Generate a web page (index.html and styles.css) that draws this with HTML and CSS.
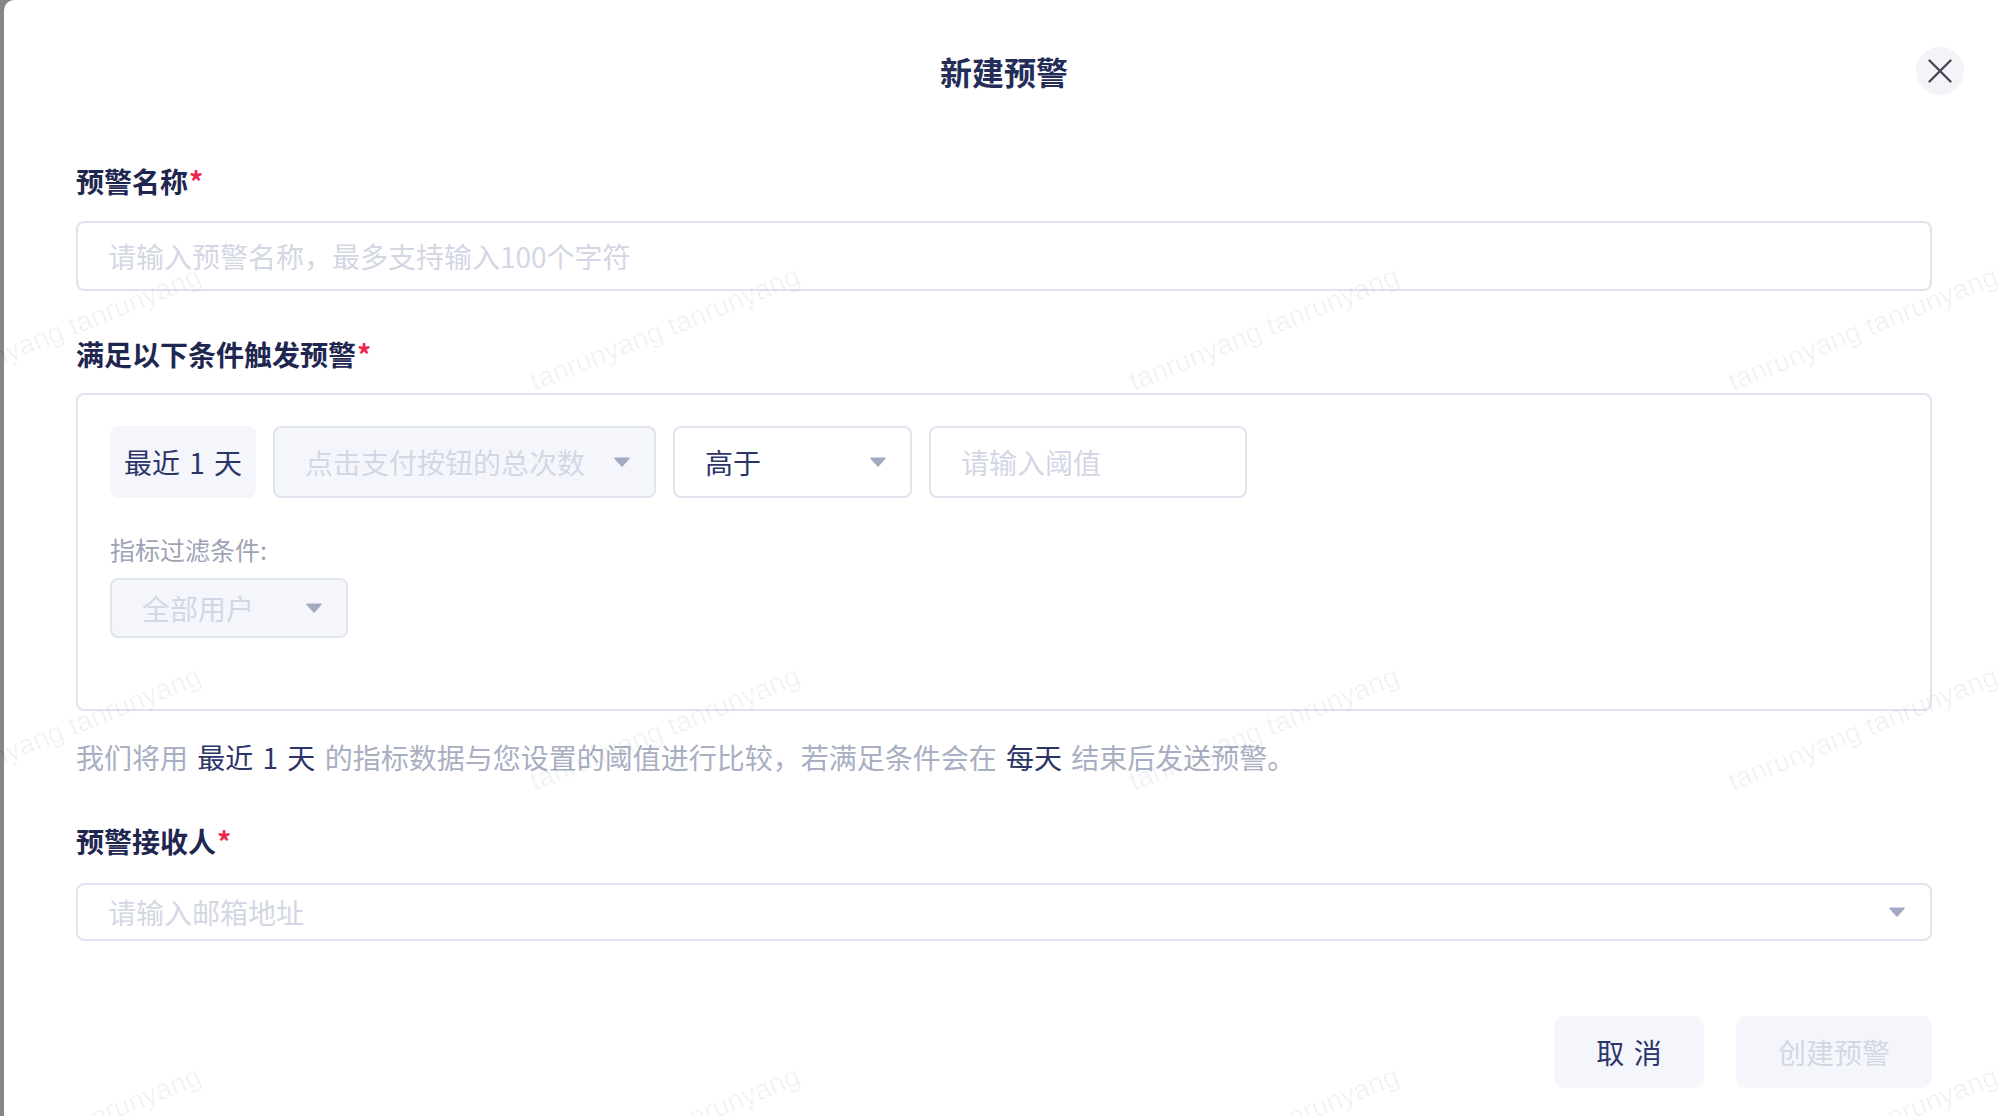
FILE: index.html
```html
<!DOCTYPE html>
<html lang="zh-CN">
<head>
<meta charset="utf-8">
<title>新建预警</title>
<link rel="stylesheet" href="styles.css">
</head>
<body>
<div class="modal">
  <header class="modal-header">
    <div class="header-spacer"></div>
    <h1 class="modal-title">新建预警</h1>
    <button class="close-btn" type="button" aria-label="关闭">
      <svg width="24" height="24" viewBox="0 0 24 24"><path d="M1.5 1.5L22.5 22.5M22.5 1.5L1.5 22.5" stroke="#4d4358" stroke-width="2.4" stroke-linecap="round" fill="none"/></svg>
    </button>
  </header>

  <section class="field field-name">
    <div class="field-label">预警名称<span class="req">*</span></div>
    <input class="text-input name-input" type="text" placeholder="请输入预警名称，最多支持输入100个字符">
  </section>

  <section class="field field-cond">
    <div class="field-label">满足以下条件触发预警<span class="req">*</span></div>
    <div class="cond-box">
      <div class="cond-row">
        <div class="chip">最近 1 天</div>
        <div class="select select-metric is-disabled">
          <span class="select-text">点击支付按钮的总次数</span>
          <svg class="caret" width="16" height="10" viewBox="0 0 16 10"><path d="M1 0.5H15a0.8 0.8 0 0 1 0.6 1.3L8.6 9.4a0.8 0.8 0 0 1-1.2 0L0.4 1.8A0.8 0.8 0 0 1 1 0.5Z"/></svg>
        </div>
        <div class="select select-op">
          <span class="select-text is-value">高于</span>
          <svg class="caret" width="16" height="10" viewBox="0 0 16 10"><path d="M1 0.5H15a0.8 0.8 0 0 1 0.6 1.3L8.6 9.4a0.8 0.8 0 0 1-1.2 0L0.4 1.8A0.8 0.8 0 0 1 1 0.5Z"/></svg>
        </div>
        <input class="text-input threshold-input" type="text" placeholder="请输入阈值">
      </div>
      <div class="filter-label">指标过滤条件:</div>
      <div class="select select-filter is-disabled">
        <span class="select-text">全部用户</span>
        <svg class="caret" width="16" height="10" viewBox="0 0 16 10"><path d="M1 0.5H15a0.8 0.8 0 0 1 0.6 1.3L8.6 9.4a0.8 0.8 0 0 1-1.2 0L0.4 1.8A0.8 0.8 0 0 1 1 0.5Z"/></svg>
      </div>
    </div>
    <p class="cond-desc">我们将用 <span class="hl">最近 1 天</span> 的指标数据与您设置的阈值进行比较，若满足条件会在 <span class="hl">每天</span> 结束后发送预警。</p>
  </section>

  <section class="field field-recv">
    <div class="field-label">预警接收人<span class="req">*</span></div>
    <div class="select select-email">
      <input class="email-input" type="text" placeholder="请输入邮箱地址">
      <svg class="caret" width="16" height="10" viewBox="0 0 16 10"><path d="M1 0.5H15a0.8 0.8 0 0 1 0.6 1.3L8.6 9.4a0.8 0.8 0 0 1-1.2 0L0.4 1.8A0.8 0.8 0 0 1 1 0.5Z"/></svg>
    </div>
  </section>

  <footer class="modal-footer">
    <button class="btn btn-cancel" type="button">取 消</button>
    <button class="btn btn-create" type="button" disabled>创建预警</button>
  </footer>
</div>

<div class="watermark" aria-hidden="true">
  <div class="wm-grid">
    <div class="wm-cell"><span>tanrunyang tanrunyang</span></div>
    <div class="wm-cell"><span>tanrunyang tanrunyang</span></div>
    <div class="wm-cell"><span>tanrunyang tanrunyang</span></div>
    <div class="wm-cell"><span>tanrunyang tanrunyang</span></div>
    <div class="wm-cell"><span>tanrunyang tanrunyang</span></div>
    <div class="wm-cell"><span>tanrunyang tanrunyang</span></div>
    <div class="wm-cell"><span>tanrunyang tanrunyang</span></div>
    <div class="wm-cell"><span>tanrunyang tanrunyang</span></div>
    <div class="wm-cell"><span>tanrunyang tanrunyang</span></div>
    <div class="wm-cell"><span>tanrunyang tanrunyang</span></div>
    <div class="wm-cell"><span>tanrunyang tanrunyang</span></div>
    <div class="wm-cell"><span>tanrunyang tanrunyang</span></div>
  </div>
</div>
</body>
</html>
```

FILE: styles.css
```css
* {
  box-sizing: border-box;
}

html,
body {
  margin: 0;
  height: 100%;
}

body {
  position: relative;
  overflow: hidden;
  background: #868686;
  font-family: "Noto Sans CJK SC", "Noto Sans", sans-serif;
  color: #2c3568;
}

.modal {
  width: 1994px;
  height: 1116px;
  margin-left: 4px;
  padding: 47px 66px 0 72px;
  background: #ffffff;
  border-top-left-radius: 10px;
}

/* header */
.modal-header {
  display: grid;
  grid-template-columns: 1fr auto 1fr;
  align-items: center;
  height: 48px;
}

.modal-title {
  margin: 0;
  font-size: 32px;
  line-height: 48px;
  font-weight: 700;
  color: #242c58;
}

.close-btn {
  justify-self: end;
  margin-right: -32px;
  width: 48px;
  height: 48px;
  padding: 0;
  border: none;
  border-radius: 50%;
  background: #f4f4f8;
  display: flex;
  align-items: center;
  justify-content: center;
}

/* fields */
.field-label {
  font-size: 28px;
  line-height: 40px;
  font-weight: 700;
  color: #1f2750;
}

.req {
  color: #f0264f;
  margin-left: 1px;
}

.field-name .field-label {
  margin-top: 66px;
}

.field-cond .field-label {
  margin-top: 43px;
}

.field-recv .field-label {
  margin-top: 44px;
}

.text-input {
  display: block;
  border: 2px solid #e0e4ef;
  border-radius: 8px;
  background: #ffffff;
  padding: 0 30px;
  font-family: inherit;
  font-size: 28px;
  color: #2c3568;
  outline: none;
}

.text-input::placeholder,
.email-input::placeholder {
  color: #d3d7e4;
}

.name-input {
  width: 100%;
  height: 70px;
  margin-top: 20px;
}

/* condition box */
.cond-box {
  margin-top: 19px;
  height: 318px;
  border: 2px solid #e0e4ef;
  border-radius: 8px;
  padding: 31px 32px 0;
}

.cond-row {
  display: flex;
  gap: 17px;
  height: 72px;
}

.chip {
  width: 146px;
  display: flex;
  align-items: center;
  justify-content: center;
  background: #f5f6fb;
  border-radius: 8px;
  font-size: 28px;
  color: #2c3568;
  white-space: pre;
  word-spacing: 3px;
}

.select {
  display: flex;
  align-items: center;
  border: 2px solid #e0e4ef;
  border-radius: 8px;
  background: #ffffff;
  padding: 0 24px 0 30px;
}

.select.is-disabled {
  background: #f5f6fb;
}

.select-text {
  flex: 1;
  font-size: 28px;
  color: #d3d7e4;
  white-space: nowrap;
}

.select-text.is-value {
  color: #2c3568;
}

.caret {
  flex: none;
  fill: #a3aac4;
}

.select-metric {
  width: 383px;
}

.select-op {
  width: 239px;
}

.threshold-input {
  width: 318px;
  height: 72px;
}

.filter-label {
  margin-top: 33px;
  font-size: 25px;
  line-height: 36px;
  color: #9ea3b5;
}

.select-filter {
  margin-top: 11px;
  width: 238px;
  height: 60px;
}

.cond-desc {
  margin: 26px 0 0;
  font-size: 28px;
  line-height: 40px;
  color: #a9afc2;
  white-space: pre;
  word-spacing: 3px;
}

.hl {
  color: #2c3568;
}

/* receivers */
.select-email {
  margin-top: 22px;
  height: 58px;
  padding-right: 25px;
}

.email-input {
  flex: 1;
  border: none;
  outline: none;
  background: transparent;
  padding: 0;
  font-family: inherit;
  font-size: 28px;
  color: #2c3568;
}

/* footer */
.modal-footer {
  display: flex;
  justify-content: flex-end;
  gap: 32px;
  margin-top: 75px;
}

.btn {
  height: 72px;
  border: none;
  border-radius: 10px;
  background: #f5f6fb;
  font-family: inherit;
  font-size: 28px;
  padding: 0;
}

.btn-cancel {
  width: 150px;
  color: #2c3568;
  white-space: pre;
  word-spacing: 3px;
}

.btn-create {
  width: 196px;
  color: #d3d7e4;
}

/* watermark overlay */
.watermark {
  position: absolute;
  inset: 0;
  overflow: hidden;
  pointer-events: none;
}

.wm-grid {
  display: grid;
  grid-template-columns: repeat(4, 599px);
  grid-auto-rows: 400px;
  margin-left: -234px;
  margin-top: 129px;
}

.wm-cell {
  display: flex;
  align-items: center;
  justify-content: center;
}

.wm-cell span {
  transform: rotate(-22deg);
  white-space: nowrap;
  font-family: "Liberation Sans", sans-serif;
  font-size: 28px;
  color: rgba(40, 40, 80, 0.06);
}
```
